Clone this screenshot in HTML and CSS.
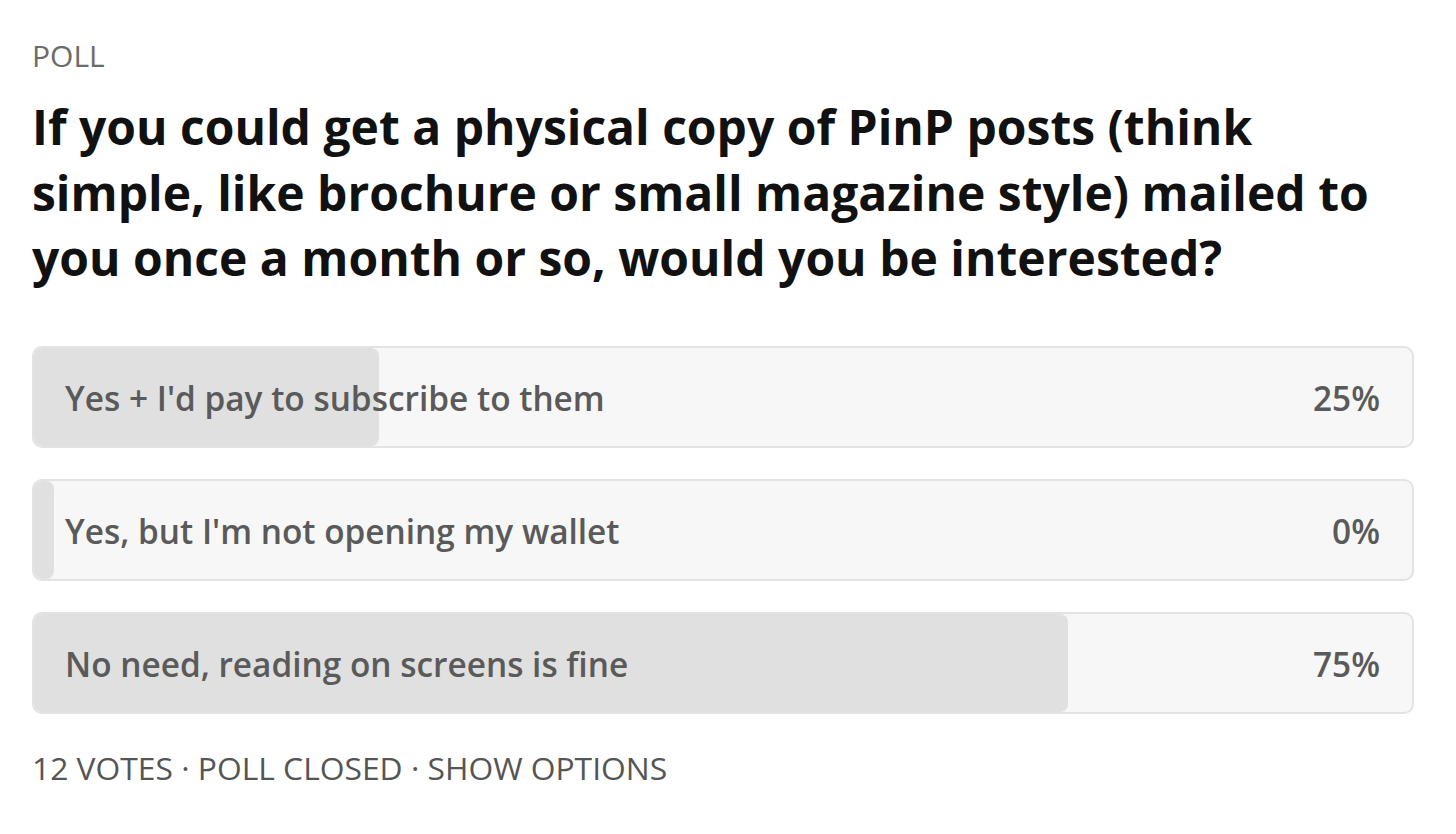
FILE: index.html
```html
<!DOCTYPE html>
<html>
<head>
<meta charset="utf-8">
<link rel="stylesheet" href="styles.css">
</head>
<body>
<div class="poll">
  <div class="label">POLL</div>
  <h1 class="question">If you could get a physical copy of PinP posts (think simple, like brochure or small magazine style) mailed to you once a month or so, would you be interested?</h1>
  <div class="options">
    <div class="option">
      <div class="fill" style="width:25%"></div>
      <span class="text">Yes + I'd pay to subscribe to them</span>
      <span class="pct">25%</span>
    </div>
    <div class="option">
      <div class="fill fill-min" style="width:0%"></div>
      <span class="text">Yes, but I'm not opening my wallet</span>
      <span class="pct">0%</span>
    </div>
    <div class="option">
      <div class="fill" style="width:75%"></div>
      <span class="text">No need, reading on screens is fine</span>
      <span class="pct">75%</span>
    </div>
  </div>
  <div class="footer">12 VOTES · POLL CLOSED · SHOW OPTIONS</div>
</div>
</body>
</html>
```
FILE: styles.css
```css
html, body {
  margin: 0;
  padding: 0;
  background: #ffffff;
}
body {
  font-family: "Open Sans", "Noto Sans", sans-serif;
}
.poll {
  padding: 36px 42px 0 32px;
}
.label {
  font-size: 30px;
  color: #6b6b6b;
  line-height: 40px;
}
.question {
  margin: 18px 0 0 0;
  font-size: 48px;
  font-weight: 700;
  line-height: 65.5px;
  color: #111111;
}
.options {
  margin-top: 55px;
  display: flex;
  flex-direction: column;
  gap: 31px;
}
.option {
  position: relative;
  box-sizing: border-box;
  height: 102px;
  border: 2px solid #e3e3e3;
  border-radius: 10px;
  background: #f7f7f7;
  display: flex;
  align-items: center;
  justify-content: space-between;
  padding: 2px 32px 0 31px;
  overflow: hidden;
  font-size: 33.4px;
  font-weight: 600;
  color: #5a5a5a;
}
.fill {
  position: absolute;
  left: 0;
  top: 0;
  bottom: 0;
  background: #e0e0e0;
  border-radius: 8px;
}
.fill-min {
  min-width: 20px;
}
.text, .pct {
  position: relative;
}
.footer {
  margin-top: 32px;
  font-size: 31.8px;
  color: #555555;
}
```
